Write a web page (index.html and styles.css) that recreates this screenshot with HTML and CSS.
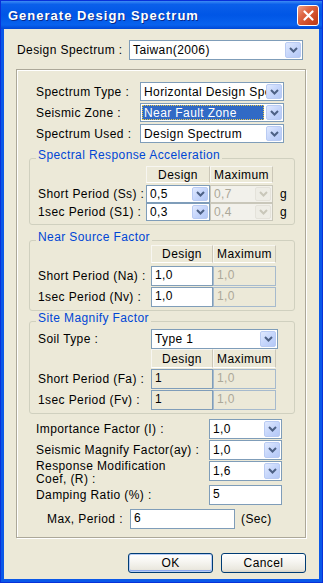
FILE: index.html
```html
<!DOCTYPE html>
<html>
<head>
<meta charset="utf-8">
<title>Generate Design Spectrum</title>
<link rel="stylesheet" href="styles.css">
</head>
<body>
<div class="win">
  <div class="titlebar">
    <span class="title">Generate Design Spectrum</span>
    <span class="close"><svg width="11" height="11" viewBox="0 0 11 11"><path d="M1.5 1.5L9.5 9.5M9.5 1.5L1.5 9.5" stroke="#fff" stroke-width="2.2" stroke-linecap="round"/></svg></span>
  </div>
  <div class="client">
    <div class="toprow">
      <span class="lbl lbl-top">Design Spectrum :</span>
      <div class="combo combo-top"><span class="val">Taiwan(2006)</span><span class="arrow"><svg width="9" height="6" viewBox="0 0 9 6"><path d="M1 1l3.5 3.5L8 1" fill="none" stroke="#4D6185" stroke-width="2"/></svg></span></div>
    </div>

    <div class="mainframe">
      <div class="frow">
        <span class="lbl lbl-main">Spectrum Type :</span>
        <div class="combo combo-main"><span class="val">Horizontal Design Spectrum</span><span class="arrow"><svg width="9" height="6" viewBox="0 0 9 6"><path d="M1 1l3.5 3.5L8 1" fill="none" stroke="#4D6185" stroke-width="2"/></svg></span></div>
      </div>
      <div class="frow">
        <span class="lbl lbl-main">Seismic Zone :</span>
        <div class="combo combo-main"><span class="val sel"><span class="hl">Near Fault Zone</span></span><span class="arrow"><svg width="9" height="6" viewBox="0 0 9 6"><path d="M1 1l3.5 3.5L8 1" fill="none" stroke="#4D6185" stroke-width="2"/></svg></span></div>
      </div>
      <div class="frow">
        <span class="lbl lbl-main">Spectrum Used :</span>
        <div class="combo combo-main"><span class="val">Design Spectrum</span><span class="arrow"><svg width="9" height="6" viewBox="0 0 9 6"><path d="M1 1l3.5 3.5L8 1" fill="none" stroke="#4D6185" stroke-width="2"/></svg></span></div>
      </div>

      <!-- Spectral Response Acceleration -->
      <div class="grp grp-sra">
        <div class="grp-title">Spectral Response Acceleration</div>
        <div class="ghead ghead-sra"><span class="hcell hd1">Design</span><span class="hcell hm1">Maximum</span></div>
        <div class="grow grow-first">
          <span class="lbl lbl-g1">Short Period (Ss) :</span>
          <div class="combo cd1"><span class="val">0,5</span><span class="arrow"><svg width="9" height="6" viewBox="0 0 9 6"><path d="M1 1l3.5 3.5L8 1" fill="none" stroke="#4D6185" stroke-width="2"/></svg></span></div>
          <div class="combo cm1 disabled"><span class="val">0,7</span><span class="arrow"><svg width="9" height="6" viewBox="0 0 9 6"><path d="M1 1l3.5 3.5L8 1" fill="none" stroke="#C9C7BA" stroke-width="2"/></svg></span></div>
          <span class="unit">g</span>
        </div>
        <div class="grow">
          <span class="lbl lbl-g1">1sec Period (S1) :</span>
          <div class="combo cd1"><span class="val">0,3</span><span class="arrow"><svg width="9" height="6" viewBox="0 0 9 6"><path d="M1 1l3.5 3.5L8 1" fill="none" stroke="#4D6185" stroke-width="2"/></svg></span></div>
          <div class="combo cm1 disabled"><span class="val">0,4</span><span class="arrow"><svg width="9" height="6" viewBox="0 0 9 6"><path d="M1 1l3.5 3.5L8 1" fill="none" stroke="#C9C7BA" stroke-width="2"/></svg></span></div>
          <span class="unit">g</span>
        </div>
      </div>

      <!-- Near Source Factor -->
      <div class="grp grp-nsf">
        <div class="grp-title">Near Source Factor</div>
        <div class="ghead ghead-2"><span class="hcell hd2">Design</span><span class="hcell hm2">Maximum</span></div>
        <div class="irow irow-first">
          <span class="lbl lbl-g2">Short Period (Na) :</span>
          <span class="inp id2">1,0</span>
          <span class="inp im2 dis">1,0</span>
        </div>
        <div class="irow">
          <span class="lbl lbl-g2">1sec Period (Nv) :</span>
          <span class="inp id2">1,0</span>
          <span class="inp im2 dis">1,0</span>
        </div>
      </div>

      <!-- Site Magnify Factor -->
      <div class="grp grp-smf">
        <div class="grp-title">Site Magnify Factor</div>
        <div class="soilrow">
          <span class="lbl lbl-g2">Soil Type :</span>
          <div class="combo combo-soil"><span class="val">Type 1</span><span class="arrow"><svg width="9" height="6" viewBox="0 0 9 6"><path d="M1 1l3.5 3.5L8 1" fill="none" stroke="#4D6185" stroke-width="2"/></svg></span></div>
        </div>
        <div class="ghead ghead-3"><span class="hcell hd2">Design</span><span class="hcell hm2">Maximum</span></div>
        <div class="irow irow-tight">
          <span class="lbl lbl-g2">Short Period (Fa) :</span>
          <span class="inp id2 ro">1</span>
          <span class="inp im2 dis">1,0</span>
        </div>
        <div class="irow irow-tight">
          <span class="lbl lbl-g2">1sec Period (Fv) :</span>
          <span class="inp id2 ro">1</span>
          <span class="inp im2 dis">1,0</span>
        </div>
      </div>

      <div class="brow brow-first">
        <span class="lbl lbl-b">Importance Factor (I) :</span>
        <div class="combo combo-b"><span class="val">1,0</span><span class="arrow"><svg width="9" height="6" viewBox="0 0 9 6"><path d="M1 1l3.5 3.5L8 1" fill="none" stroke="#4D6185" stroke-width="2"/></svg></span></div>
      </div>
      <div class="brow">
        <span class="lbl lbl-b">Seismic Magnify Factor(ay) :</span>
        <div class="combo combo-b"><span class="val">1,0</span><span class="arrow"><svg width="9" height="6" viewBox="0 0 9 6"><path d="M1 1l3.5 3.5L8 1" fill="none" stroke="#4D6185" stroke-width="2"/></svg></span></div>
      </div>
      <div class="brow">
        <span class="lbl lbl-b lbl-two">Response Modification<br>Coef, (R) :</span>
        <div class="combo combo-b"><span class="val">1,6</span><span class="arrow"><svg width="9" height="6" viewBox="0 0 9 6"><path d="M1 1l3.5 3.5L8 1" fill="none" stroke="#4D6185" stroke-width="2"/></svg></span></div>
      </div>
      <div class="brow brow-gap">
        <span class="lbl lbl-b">Damping Ratio (%) :</span>
        <span class="inp inp-b">5</span>
      </div>
      <div class="brow brow-gap">
        <span class="lbl lbl-mp">Max, Period :</span>
        <span class="inp inp-mp">6</span>
        <span class="unit-sec">(Sec)</span>
      </div>
    </div>

    <div class="buttons">
      <button class="btn btn-default">OK</button>
      <button class="btn">Cancel</button>
    </div>
  </div>
</div>
</body>
</html>
```
FILE: styles.css
```css
*{margin:0;padding:0;box-sizing:border-box;}
body{width:323px;height:583px;overflow:hidden;background:#ECE9D8;font-family:"Liberation Sans",Arial,sans-serif;font-size:12px;letter-spacing:.4px;color:#000;}

.win{width:323px;height:583px;display:flex;flex-direction:column;background:#0A58E8;border:1px solid #0831D9;}
.titlebar{height:28px;display:flex;align-items:center;justify-content:space-between;padding:0 3px 0 7px;background:linear-gradient(#3D8CF5 0,#0A5FEA 12%,#0056E6 50%,#0862EE 85%,#0048D6 100%);}
.title{color:#fff;font-weight:bold;font-size:13px;letter-spacing:1px;text-shadow:1px 1px #0A2A8A;}
.close{width:22px;height:21px;display:flex;align-items:center;justify-content:center;border:1px solid #fff;border-radius:3px;background:linear-gradient(135deg,#EFA088 0,#DE6643 35%,#CB4621 75%,#B83A18 100%);}

.client{flex:1;margin:0 3px 3px;background:#ECE9D8;}

.lbl{white-space:nowrap;}
.toprow{display:flex;align-items:center;height:20px;margin:11px 0 0 13px;}
.lbl-top{width:112px;}
.combo-top{width:174px;height:20px;}

/* combo box */
.combo{display:flex;border:1px solid #7F9DB9;background:#fff;}
.combo .val{flex:1;min-width:0;overflow:hidden;white-space:nowrap;display:flex;align-items:center;padding-left:3px;}
.combo .arrow{width:16px;margin:1px 1px 1px 0;display:flex;align-items:center;justify-content:center;border:1px solid #B9CBF3;border-radius:2px;background:linear-gradient(135deg,#E0E9FE 0,#C6D6FB 50%,#B4C8F6 100%);}
.combo .val.sel{padding:1px 2px 1px 1px;}
.combo .hl{flex:1;height:100%;display:flex;align-items:center;padding-left:2px;background:#316AC5;color:#fff;outline:1px dotted #E8C848;outline-offset:-1px;}
.combo.disabled{border-color:#C9C7BA;background:#F2F1EB;color:#ACA899;}
.combo.disabled .arrow{border-color:#E4E2DA;background:#EEEDE6;}

/* text boxes */
.inp{display:flex;align-items:center;padding:0 0 2px 3px;height:20px;border:1px solid #7F9DB9;background:#fff;}
.inp.ro{background:#ECE9D8;}
.inp.dis{background:#ECE9D8;color:#ACA899;border-color:#A6BACD;}

.mainframe{width:290px;height:469px;margin:9px 0 0 12px;padding-top:10px;display:flex;flex-direction:column;align-items:flex-start;border:1px solid #ACA899;box-shadow:inset 1px 1px #fff,1px 1px #fff;}
.frow{display:flex;align-items:center;height:19px;margin:2px 0 0 19px;}
.lbl-main{width:104px;}
.combo-main{width:144px;height:19px;}

/* group boxes */
.grp{width:266px;margin:15px 0 0 12px;padding-bottom:3px;border:1px solid #D0D0BF;border-radius:3px;}
.grp-nsf{margin-top:15px;}
.grp-smf{margin-top:10px;}
.grp-title{width:max-content;height:14px;line-height:14px;margin:-11px 0 0 6px;padding:0 2px;background:#ECE9D8;color:#0046D5;}

.ghead{display:flex;}
.hcell{display:flex;align-items:center;justify-content:center;border:1px solid;border-color:#F7F6F1 #CBC7B8 #FFFFFF #F7F6F1;background:#ECE9D8;}
.ghead-sra{margin:4px 0 0 116px;}
.hd1{width:64px;height:17px;}
.hm1{width:63px;height:17px;}
.ghead-2{margin:1px 0 0 121px;}
.ghead-3{margin:0 0 0 121px;}
.hd2{width:62px;height:18px;}
.hm2{width:63px;height:18px;}
.ghead-3 .hcell{height:19px;}

.grow{display:flex;align-items:center;height:18px;}
.grow-first{margin-top:2px;}
.lbl-g1{width:108px;margin-left:8px;}
.cd1{width:64px;height:18px;}
.cm1{width:63px;height:18px;}
.unit{margin-left:7px;}

.irow{display:flex;align-items:center;margin-top:1px;}
.irow-first{margin-top:3px;}
.lbl-g2{width:113px;margin-left:8px;}
.id2{width:62px;}
.im2{width:63px;}

.soilrow{display:flex;align-items:center;height:20px;margin-top:4px;}
.combo-soil{width:127px;height:20px;}

.brow{display:flex;align-items:center;height:20px;margin:1px 0 0 19px;}
.brow-first{margin-top:5px;}
.brow-gap{margin-top:4px;}
.lbl-b{width:173px;}
.lbl-two{line-height:13px;padding-top:3px;}
.combo-b{width:73px;height:20px;}
.inp-b{width:73px;}
.lbl-mp{width:83px;margin-left:11px;}
.inp-mp{width:105px;}
.unit-sec{margin-left:6px;}

/* buttons */
.buttons{display:flex;gap:8px;margin:15px 0 0 124px;}
.btn{width:85px;height:20px;font:inherit;letter-spacing:.4px;color:#000;border:1px solid #003C74;border-radius:3px;background:linear-gradient(#FFFFFF 0,#F7F6F2 40%,#EAE8DF 85%,#D8D3C8 100%);}
.btn-default{box-shadow:inset 0 0 0 1px #B6CCF5,inset 0 -1px 0 1px #8CA8EE;}
```
